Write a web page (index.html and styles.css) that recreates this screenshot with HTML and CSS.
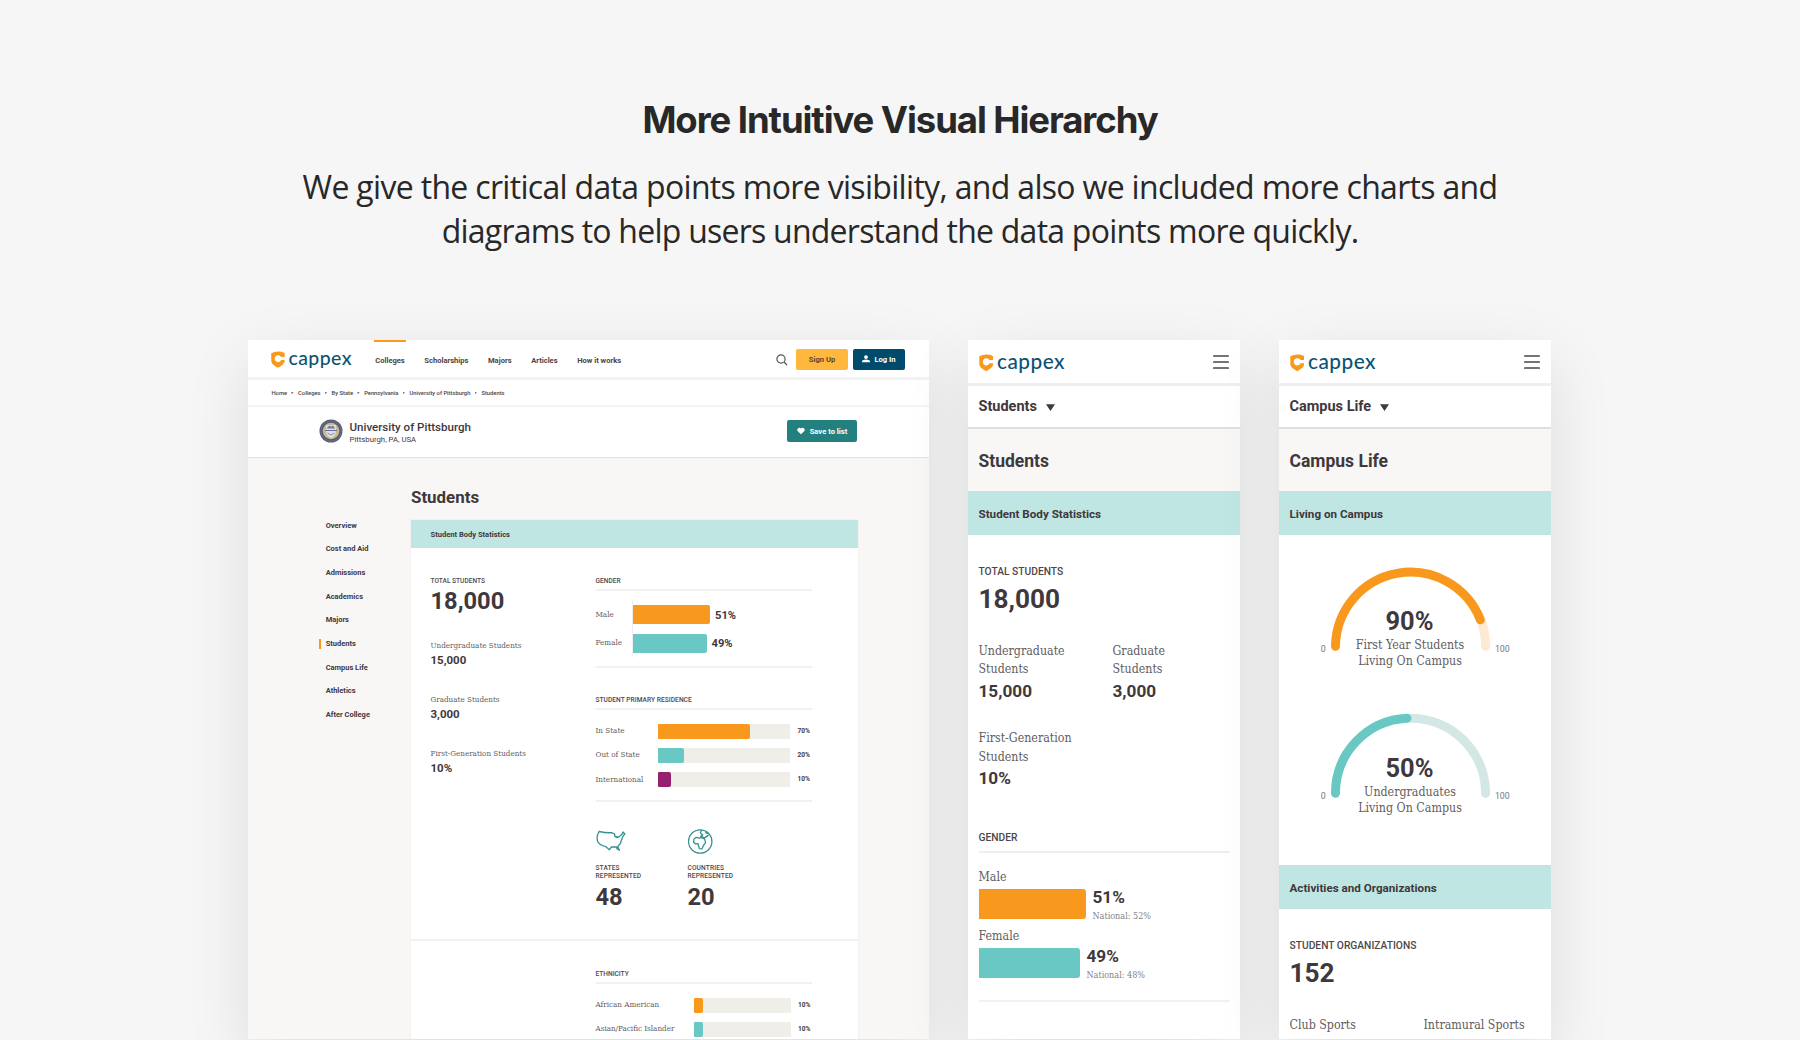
FILE: index.html
```html
<!DOCTYPE html>
<html lang="en">
<head>
<meta charset="utf-8">
<title>More Intuitive Visual Hierarchy</title>
<link rel="stylesheet" href="styles.css">
</head>
<body>
<svg class="defs" aria-hidden="true">
  <symbol id="shield" viewBox="0 0 14 17">
    <path fill="#f8981d" fill-rule="evenodd" d="M.2 2.2Q6.800 -.9 13.700 1.900V5.900H10.100Q9.500 4.200 7.100 4.200Q3.700 4.400 3.700 7.600Q3.800 11 7.100 11.200Q9.500 11.100 10.200 9.100H13.600V10.500Q13.200 13.400 7 16.800Q.6 13.500.3 10.200Z"/>
  </symbol>
</svg>
<main class="page">
  <header class="intro">
    <h1>More Intuitive Visual Hierarchy</h1>
    <p><span class="line-a">We give the critical data points more visibility, and also we included more charts and</span><br><span class="line-b">diagrams to help users understand the data points more quickly.</span></p>
  </header>

  <div class="screens">
    <section class="screen desktop">
      <div class="topbar">
        <div class="logo"><svg class="mark"><use href="#shield"/></svg><span>cappex</span></div>
        <nav class="nav">
          <a class="current">Colleges</a><a>Scholarships</a><a>Majors</a><a>Articles</a><a>How it works</a>
        </nav>
        <svg class="search" viewBox="0 0 12 12"><circle cx="5" cy="5" r="4.100"/><path d="M8 8L11 11"/></svg>
        <a class="btn signup">Sign Up</a>
        <a class="btn login"><svg viewBox="0 0 8 8"><circle cx="4" cy="2.100" r="1.900"/><path d="M0 7.200V6.300Q.5 4.600 4 4.600T8 6.300V7.200Z"/></svg>Log In</a>
      </div>
      <div class="crumbs">
        <a>Home</a><i></i><a>Colleges</a><i></i><a>By State</a><i></i><a>Pennsylvania</a><i></i><a>University of Pittsburgh</a><i></i><a>Students</a>
      </div>
      <div class="school">
        <svg class="seal" viewBox="0 0 24 24">
          <circle cx="12" cy="12" r="11.500" fill="#555a78"/><circle cx="12" cy="12" r="10" fill="none" stroke="#8d8e9c" stroke-width=".8" stroke-dasharray="1 .8"/>
          <circle cx="12" cy="12" r="8.300" fill="#c9b98c"/><path d="M7 6.200H17V13Q16.500 17 12 19Q7.500 17 7 13Z" fill="#dedfe6"/>
          <path d="M6 11.500H18M8 9H10V7.500H11V9H13V7.500H14V9H16" fill="none" stroke="#696e91" stroke-width="1.200"/><path d="M8.500 14L12 16L15.500 14" fill="none" stroke="#8b8fa8"/>
        </svg>
        <div class="school-name"><h2>University of Pittsburgh</h2><p>Pittsburgh, PA, USA</p></div>
        <a class="btn save"><svg viewBox="0 0 8 8"><path d="M4 7.300L.8 4.200C-.9 2.300 2.100-.7 4 1.600C5.900-.7 8.900 2.300 7.200 4.200Z"/></svg>Save to list</a>
      </div>
      <div class="content">
        <aside class="side">
          <a>Overview</a><a>Cost and Aid</a><a>Admissions</a><a>Academics</a><a>Majors</a><a class="active">Students</a><a>Campus Life</a><a>Athletics</a><a>After College</a>
        </aside>
        <div class="main">
          <h2>Students</h2>
          <div class="card">
            <h3 class="card-head">Student Body Statistics</h3>
            <div class="card-body">
              <div class="totals">
                <span class="cap">Total Students</span>
                <strong class="big">18,000</strong>
                <div class="stat"><span>Undergraduate Students</span><b>15,000</b></div>
                <div class="stat"><span>Graduate Students</span><b>3,000</b></div>
                <div class="stat"><span>First-Generation Students</span><b>10%</b></div>
              </div>
              <div class="charts">
                <h4 class="cap ruled">Gender</h4>
                <div class="gender">
                  <div class="labels"><span>Male</span><span>Female</span></div>
                  <div class="plot">
                    <div class="g-row"><i class="orange" style="width:77px"></i><b>51%</b></div>
                    <div class="g-row"><i class="teal" style="width:73.5px"></i><b>49%</b></div>
                  </div>
                </div>
                <h4 class="cap ruled residence-title">Student Primary Residence</h4>
                <div class="bars residence">
                  <div class="row"><span>In State</span><div class="track"><i class="orange" style="width:70%"></i></div><b>70%</b></div>
                  <div class="row"><span>Out of State</span><div class="track"><i class="teal" style="width:20%"></i></div><b>20%</b></div>
                  <div class="row"><span>International</span><div class="track"><i class="purple" style="width:10%"></i></div><b>10%</b></div>
                </div>
                <div class="figures">
                  <div class="figure">
                    <svg viewBox="0 0 30 25"><path d="M3 2.500Q10 4 15.500 3.700L18.500 5L19 7.300L22.800 8.100L26 5.300L27 3L28.800 5L27 7.200L25.600 10.800L24.200 14.800L21.600 17.600L23.500 21.300L21.200 20L20.300 17.800L15.500 18L13.300 20.700L10 17.700Q3 16 1.700 12.500Q.1 7.500 3 2.500ZM18 6.700L21.500 9"/></svg>
                    <span class="cap">States<br>Represented</span><strong class="big">48</strong>
                  </div>
                  <div class="figure">
                    <svg viewBox="0 0 25 25"><circle cx="12.200" cy="12.500" r="11.700"/><path d="M13.800 1L12.300 3.800L14.800 5.900L12.700 7.400L16.500 8.900L20.600 6.100M18.200 2.500L19.700 4.300L17.300 3.600M8 8.400L6 9.900L5.500 13L7.300 14.800L10 14.600L11.400 19.700L14 19.800L15.500 16.300L17.600 13.900L16.700 10.200L13.700 8.500L11.300 9.100Z"/></svg>
                    <span class="cap">Countries<br>Represented</span><strong class="big">20</strong>
                  </div>
                </div>
              </div>
            </div>
            <div class="ethnicity">
              <h4 class="cap ruled">Ethnicity</h4>
              <div class="bars">
                <div class="row"><span>African American</span><div class="track"><i class="orange" style="width:10%"></i></div><b>10%</b></div>
                <div class="row"><span>Asian/Pacific Islander</span><div class="track"><i class="teal" style="width:10%"></i></div><b>10%</b></div>
              </div>
            </div>
          </div>
        </div>
      </div>
    </section>

    <section class="screen phone">
      <div class="m-top"><div class="logo"><svg class="mark"><use href="#shield"/></svg><span>cappex</span></div><svg class="menu" viewBox="0 0 16 14"><path d="M.7 1H15.300M.7 7.100H15.300M.7 13.100H15.300"/></svg></div>
      <div class="m-select">Students<svg viewBox="0 0 9 7"><path d="M0 .2H9L4.500 7Z"/></svg></div>
      <h2 class="m-title">Students</h2>
      <h3 class="m-head">Student Body Statistics</h3>
      <div class="m-body">
        <span class="m-cap">Total Students</span>
        <strong class="m-big">18,000</strong>
        <div class="m-grid">
          <div class="m-stat"><span>Undergraduate<br>Students</span><b>15,000</b></div>
          <div class="m-stat"><span>Graduate<br>Students</span><b>3,000</b></div>
          <div class="m-stat"><span>First-Generation<br>Students</span><b>10%</b></div>
        </div>
        <h4 class="m-cap m-ruled">Gender</h4>
        <div class="m-gender">
          <span>Male</span>
          <div class="m-bar"><i class="orange" style="width:107px"></i><div><b>51%</b><small>National: 52%</small></div></div>
          <span>Female</span>
          <div class="m-bar"><i class="teal" style="width:101px"></i><div><b>49%</b><small>National: 48%</small></div></div>
        </div>
      </div>
    </section>

    <section class="screen phone">
      <div class="m-top"><div class="logo"><svg class="mark"><use href="#shield"/></svg><span>cappex</span></div><svg class="menu" viewBox="0 0 16 14"><path d="M.7 1H15.300M.7 7.100H15.300M.7 13.100H15.300"/></svg></div>
      <div class="m-select">Campus Life<svg viewBox="0 0 9 7"><path d="M0 .2H9L4.500 7Z"/></svg></div>
      <h2 class="m-title">Campus Life</h2>
      <h3 class="m-head">Living on Campus</h3>
      <div class="gauges">
        <svg class="gauge" viewBox="0 0 272 147">
          <path class="arc" stroke="#fee9d2" d="M200 80A75.200 75.200 0 0 1 206.700 111.500"/>
          <path class="arc" stroke="#f8981d" d="M56.300 111.500A75.200 75.200 0 0 1 201.500 85"/>
          <text class="g-num" x="130.500" y="95">90%</text>
          <text class="g-text" x="131" y="114.500">First Year Students</text><text class="g-text" x="131" y="130.500">Living On Campus</text>
          <text class="g-end" x="44" y="117.500">0</text><text class="g-end" x="223.500" y="117.500">100</text>
        </svg>
        <svg class="gauge" viewBox="0 0 272 147">
          <path class="arc" stroke="#d3e8e5" d="M131.500 36.300A75.200 75.200 0 0 1 206.700 111.500"/>
          <path class="arc" stroke="#69c8c3" d="M56.300 111.500A75.200 75.200 0 0 1 128 36.400"/>
          <text class="g-num" x="130.500" y="95">50%</text>
          <text class="g-text" x="131" y="114.500">Undergraduates</text><text class="g-text" x="131" y="130.500">Living On Campus</text>
          <text class="g-end" x="44" y="117.500">0</text><text class="g-end" x="223.500" y="117.500">100</text>
        </svg>
      </div>
      <h3 class="m-head">Activities and Organizations</h3>
      <div class="m-body">
        <span class="m-cap">Student Organizations</span>
        <strong class="m-big">152</strong>
        <div class="m-grid"><div class="m-stat"><span>Club Sports</span></div><div class="m-stat"><span>Intramural Sports</span></div></div>
      </div>
    </section>
  </div>
</main>
</body>
</html>
```
FILE: styles.css
```css
* { box-sizing: border-box; }
body { margin: 0; background: #f6f6f6; font-family: Roboto, "Liberation Sans", sans-serif; color: #3f383c; }
h1, h2, h3, h4, p { margin: 0; }
svg { display: block; flex: none; }
i { display: block; font-style: normal; }
.defs { position: absolute; width: 0; height: 0; }
.page { width: 1800px; height: 1040px; overflow: hidden; }

/* intro */
.intro { height: 340px; padding-top: 95px; text-align: center; color: #282828; }
.intro h1 { font: 700 36.500px/50px Inter, sans-serif; letter-spacing: -1.080px; }
.intro p { margin-top: 20px; font: 400 32px/44px "Open Sans", sans-serif; white-space: nowrap; }
.line-a { letter-spacing: -.680px; }
.line-b { letter-spacing: -.760px; }

/* screens */
.screens { display: flex; align-items: flex-start; padding-left: 248px; gap: 39px; }
.screen { height: 699px; overflow: hidden; background: #fff; box-shadow: 0 20px 60px rgba(0, 0, 0, .1); flex: none; }
.desktop { width: 681px; }
.phone { width: 272px; }
.orange { background: #f8981d; }
.teal { background: #69c8c3; }
.purple { background: #96206f; }

.logo { display: flex; align-items: flex-start; color: #0b5374; font: 500 19.400px/24px Lato, sans-serif; letter-spacing: .450px; }
.mark { width: 14px; height: 17px; }

/* desktop header */
.topbar { display: flex; height: 40px; border-bottom: 3px solid #f2f2f2; padding-left: 23px; }
.topbar .logo { width: 102.500px; padding-top: 10.500px; gap: 3.500px; }
.topbar .logo span { margin-top: -4.500px; }
.nav { display: flex; gap: 19.600px; font: 700 7.560px/41px Roboto, sans-serif; width: 402px; color: #4a4447; }
.nav a { white-space: nowrap; }
.nav .current { border-top: 2px solid #f8981d; line-height: 37px; height: 20px; padding: 0 1.700px; margin-right: -1.700px; }
.search { width: 12px; height: 12px; margin-top: 13.500px; fill: none; stroke: #555; stroke-width: 1.200; }
.btn { display: flex; align-items: center; justify-content: center; height: 21.500px; border-radius: 2px; font-weight: 700; font-size: 7.600px; color: #fff; flex: none; }
.btn svg { width: 8px; height: 8px; fill: #fff; }
.signup { width: 52px; margin: 8.500px 5px 0 8.500px; background: #ffb83d; color: #5a4632; padding-top: 1px; }
.login { width: 52px; margin-top: 8.500px; background: #004b6b; gap: 4px; }
.crumbs { display: flex; height: 27px; border-bottom: 2px solid #f4f4f4; padding-left: 23.500px; font: 500 5.800px/26px Roboto, sans-serif; color: #4a4447; }
.crumbs i { width: 2.500px; height: 2.500px; margin: 11.500px 4.250px 0; background: #777; clip-path: polygon(0 0, 100% 50%, 0 100%); }
.school { display: flex; height: 51px; border-bottom: 1px solid #dfe0e0; padding: 0 72px 0 70.500px; }
.seal { width: 24px; height: 24px; margin-top: 12px; }
.school-name { margin: 13px auto 0 7px; }
.school-name h2 { font: 500 11.550px/14px Roboto, sans-serif; }
.school-name p { font-size: 7.750px; line-height: 12px; }
.save { width: 70px; margin-top: 13px; background: #23807f; gap: 5px; padding-top: 1px; }

/* desktop content */
.content { display: flex; height: 581px; background: #f8f7f5; }
.side { display: flex; flex-direction: column; width: 163px; padding: 55.500px 0 0 71px; font: 700 7.480px/23.700px Roboto, sans-serif; }
.side a { display: flex; align-items: center; height: 23.700px; padding-left: 6.700px; flex: none; }
.side .active::before { content: ""; width: 2px; height: 10px; margin: 0 4.700px 0 -6.700px; background: #f8981d; }
.main { width: 447px; }
.main > h2 { padding-top: 28.500px; height: 62px; font: 700 16.900px/20px Roboto, sans-serif; }
.card { background: #fff; box-shadow: 0 0 1px rgba(0, 0, 0, .15); height: 540px; }
.card-head { height: 28px; padding-left: 19.500px; background: #bfe6e2; font: 700 7.550px/30px Roboto, sans-serif; }
.card-body { display: flex; height: 393px; padding: 29px 46px 0 19.500px; border-bottom: 2px solid #f2f2f2; }
.cap { display: block; font: 500 6.600px/8px Roboto, sans-serif; text-transform: uppercase; color: #4d474a; }
.big { display: block; font: 700 23.700px/24px Roboto, sans-serif; }
.totals { width: 165px; }
.totals .big { margin: 4px 0 28px; }
.stat { height: 54px; }
.stat span, .gender, .row { font: 400 8px/10px "DejaVu Serif Condensed", "DejaVu Serif", serif; color: #625d60; white-space: nowrap; }
.stat span, .stat b { display: block; }
.stat b { margin-top: 3px; font: 700 11.500px/12px Roboto, sans-serif; }
.charts { width: 216.500px; }
.ruled { padding-bottom: 4px; border-bottom: 2px solid #f1f1f1; height: 14px; }
.gender { display: flex; height: 77px; border-bottom: 2px solid #f1f1f1; padding-top: 10px; }
.labels { width: 36.500px; display: flex; flex-direction: column; gap: 18.700px; padding-top: 8.500px; }
.plot { display: flex; flex-direction: column; gap: 9.500px; height: 56px; padding-top: 4px; border-left: 1px solid #eee; }
.g-row { display: flex; align-items: center; gap: 5px; height: 19px; }
.g-row i { height: 19px; border-radius: 0 2px 2px 0; }
.g-row b { font: 700 11.200px/20px Roboto, sans-serif; padding-top: 2px; color: #3f383c; }
.residence-title { margin-top: 28px; letter-spacing: .050px; }
.bars { display: flex; flex-direction: column; gap: 9.300px; padding-top: 13.500px; }
.residence { height: 92px; border-bottom: 2px solid #f1f1f1; }
.row { display: flex; align-items: center; height: 15px; }
.row span { width: 62px; }
.ethnicity .row span { width: 98px; }
.track { flex: none; width: 132.500px; height: 15px; background: #efeee9; }
.ethnicity .track { width: 97px; }
.track i { height: 15px; border-radius: 1px 2px 2px 1px; }
.row b { margin-left: 7.500px; font: 700 6.600px/15px Roboto, sans-serif; color: #3f383c; }
.figures { display: flex; padding-top: 27px; }
.figure { width: 92px; }
.figure svg { height: 25px; width: auto; fill: none; stroke: #35918f; stroke-width: 1.300; stroke-linejoin: round; }
.figure .cap { margin-top: 9.500px; line-height: 8.700px; letter-spacing: .130px; }
.figure .big { margin-top: 4px; }
.ethnicity { padding: 29px 46px 0 184.500px; }

/* phone */
.m-top { display: flex; justify-content: space-between; height: 46px; border-bottom: 3px solid #efefef; padding: 14px 11px 0 10.500px; }
.m-top .logo { font-size: 20.800px; letter-spacing: .500px; gap: 4px; }
.m-top .logo span { margin-top: -5px; }
.m-top .mark { width: 14.500px; height: 17.500px; }
.menu { width: 16px; height: 14px; margin-top: 1px; fill: none; stroke: #494548; stroke-width: 1.500; stroke-linecap: round; }
.m-select { display: flex; align-items: center; gap: 9px; height: 43px; padding: 1px 10.500px 0; border-bottom: 2px solid #dfdfdf; font: 700 14.500px/20px Roboto, sans-serif; }
.m-select svg { width: 9px; height: 7px; margin-top: 1.500px; fill: #3f383c; }
.m-title { height: 62px; padding: 0 10.500px; background: #f8f7f5; font: 700 17.500px/64px Roboto, sans-serif; }
.m-head { height: 44px; padding: 0 10.500px; background: #bfe6e2; font: 700 11.650px/47px Roboto, sans-serif; }
.m-body { padding: 30.500px 10.500px 0 10.500px; }
.m-cap { display: block; font: 500 10.250px/12px Roboto, sans-serif; text-transform: uppercase; color: #4d474a; }
.m-big { display: block; margin: 7px 0 29px; font: 700 26.200px/28px Roboto, sans-serif; }
.m-grid { display: grid; grid-template-columns: 134px 1fr; grid-auto-rows: 87.500px; }
.m-stat span { display: block; font: 400 12.300px/18.900px "DejaVu Serif Condensed", "DejaVu Serif", serif; color: #625d60; white-space: nowrap; }
.m-stat b { display: block; margin-top: 1.500px; font: 700 17.200px/20px Roboto, sans-serif; }
.m-ruled { margin-top: 15px; padding-bottom: 7px; border-bottom: 2px solid #eee; height: 21px; }
.m-gender { height: 149px; border-bottom: 2px solid #f1f1f1; padding-top: 15px; }
.m-gender span { display: block; font: 400 12.300px/18px "DejaVu Serif Condensed", "DejaVu Serif", serif; color: #625d60; }
.m-bar { display: flex; gap: 7px; margin: 3.500px 0 8px; height: 29.500px; }
.m-bar i { height: 29.500px; border-radius: 0 3px 3px 0; }
.m-bar b { display: block; font: 700 17.200px/18px Roboto, sans-serif; margin-top: -1px; }
.m-bar small { display: block; font: 400 9px/12px "DejaVu Serif Condensed", "DejaVu Serif", serif; color: #858184; margin-top: 4px; }

/* gauges */
.gauges { height: 330px; overflow: hidden; }
.gauge { width: 272px; height: 146.700px; overflow: visible; }
.arc { fill: none; stroke-width: 9; stroke-linecap: round; }
.gauge text { text-anchor: middle; }
.g-num { font: 700 25.500px Roboto, sans-serif; fill: #3f383c; }
.g-text { font: 400 12.350px "DejaVu Serif Condensed", "DejaVu Serif", serif; fill: #625d60; }
.g-end { font: 400 8.800px Roboto, sans-serif; fill: #777; }
```
